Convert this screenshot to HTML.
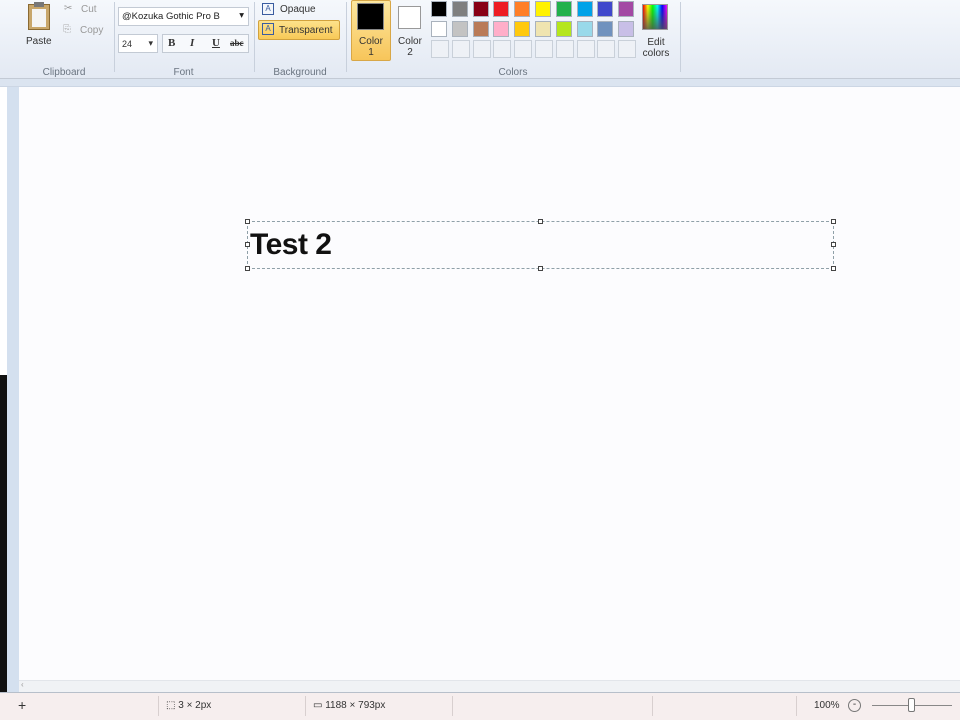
<!DOCTYPE html>
<html><head><meta charset="utf-8"><style>
*{margin:0;padding:0;box-sizing:border-box}
body{width:960px;height:720px;overflow:hidden;position:relative;background:#fcfcfe;font-family:"Liberation Sans","DejaVu Sans",sans-serif;font-size:10px;color:#333}
.abs{position:absolute}
#ribbon{left:0;top:0;width:960px;height:79px;background:linear-gradient(#f5f8fc,#e3e9f3);border-bottom:1px solid #c3cad5}
#band{left:0;top:79px;width:960px;height:8px;background:#dbe4f0;border-bottom:1px solid #ccd6e4}
.sep{width:1px;background:#c8d0dc;top:2px;height:70px}
.glabel{color:#6a7480;font-size:10px;top:67px;text-align:center}
.sw{width:16px;height:16px;border:1px solid #a9b2bd}
.emp{width:18px;height:18px;border:1px solid #c9d0d9;background:#eef1f6}
#left{left:0;top:87px;width:19px;height:606px;background:#d4e0ef;border-left:7px solid #fff}
#dark{left:0;top:375px;width:7px;height:318px;background:#111}
#status{left:0;top:692px;width:960px;height:28px;background:#f6eeee;border-top:1px solid #b7bfca}
#hs{left:19px;top:680px;width:941px;height:12px;background:#f0f2f5;border-top:1px solid #e2e5ea}
.h{width:5px;height:5px;border:1px solid #444;background:#fff}
</style></head><body>
<div id="ribbon" class="abs"></div>
<!-- clipboard -->
<div class="abs" style="left:28px;top:4px;width:22px;height:26px;background:#c8a66a;border:1px solid #8a6a33"></div>
<div class="abs" style="left:32px;top:9px;width:14px;height:18px;background:#f4f4f4"></div>
<div class="abs" style="left:34px;top:2px;width:10px;height:5px;background:#777"></div>
<div class="abs" style="left:26px;top:36px;font-size:10px;color:#333">Paste</div>
<div class="abs" style="left:64px;top:3px;color:#999">✂</div>
<div class="abs" style="left:81px;top:4px;color:#999">Cut</div>
<div class="abs" style="left:63px;top:24px;color:#aaa">⎘</div>
<div class="abs" style="left:80px;top:25px;color:#999">Copy</div>
<div class="abs glabel" style="left:20px;width:88px">Clipboard</div>
<div class="abs sep" style="left:114px"></div>
<!-- font -->
<div class="abs" style="left:118px;top:7px;width:131px;height:19px;background:#fff;border:1px solid #c3cad4;font-size:9.5px;padding:3px 3px;color:#222">@Kozuka Gothic Pro B<span style="position:absolute;right:4px;top:2px">▾</span></div>
<div class="abs" style="left:118px;top:34px;width:40px;height:19px;background:#fff;border:1px solid #c3cad4;font-size:9px;padding:4px 3px">24<span style="position:absolute;right:4px;top:3px">▾</span></div>
<div class="abs" style="left:162px;top:34px;width:87px;height:19px;background:#f7f9fc;border:1px solid #c3cad4;font-family:'Liberation Serif',serif;font-size:11px"><b class="abs" style="left:5px;top:2px">B</b><i class="abs" style="left:27px;top:2px;font-weight:bold">I</i><u class="abs" style="left:49px;top:2px;font-weight:bold">U</u><s class="abs" style="left:67px;top:3px;font-size:9px;font-weight:bold">abc</s></div>
<div class="abs glabel" style="left:118px;width:131px">Font</div>
<div class="abs sep" style="left:254px"></div>
<!-- background -->
<div class="abs" style="left:262px;top:3px;width:12px;height:12px;border:1px solid #3a5ca0;font-size:8px;color:#3a5ca0;text-align:center;line-height:10px">A</div>
<div class="abs" style="left:280px;top:4px;color:#333">Opaque</div>
<div class="abs" style="left:258px;top:20px;width:82px;height:20px;background:linear-gradient(#fde28b,#f8c957);border:1px solid #d2a23d;border-radius:2px"></div>
<div class="abs" style="left:262px;top:23px;width:12px;height:12px;border:1px solid #3a5ca0;font-size:8px;color:#3a5ca0;text-align:center;line-height:10px">A</div>
<div class="abs" style="left:279px;top:25px;color:#333">Transparent</div>
<div class="abs glabel" style="left:256px;width:88px">Background</div>
<div class="abs sep" style="left:346px"></div>
<!-- color 1/2 -->
<div class="abs" style="left:351px;top:0;width:40px;height:61px;background:linear-gradient(#fde8a0,#f7c55a);border:1px solid #d8a747;border-radius:2px"></div>
<div class="abs" style="left:357px;top:3px;width:27px;height:27px;background:#000;border:1px solid #888"></div>
<div class="abs" style="left:351px;top:36px;width:40px;text-align:center;line-height:11px">Color<br>1</div>
<div class="abs" style="left:398px;top:6px;width:23px;height:23px;background:#fff;border:1px solid #999"></div>
<div class="abs" style="left:390px;top:36px;width:40px;text-align:center;line-height:11px">Color<br>2</div>
<!-- palette -->
<div class="abs" style="left:431px;top:1px">
<div style="display:grid;grid-template-columns:repeat(10,20.8px);grid-auto-rows:19.5px">
<div class="sw" style="background:#000"></div><div class="sw" style="background:#7f7f7f"></div><div class="sw" style="background:#880015"></div><div class="sw" style="background:#ed1c24"></div><div class="sw" style="background:#ff7f27"></div><div class="sw" style="background:#fff200"></div><div class="sw" style="background:#22b14c"></div><div class="sw" style="background:#00a2e8"></div><div class="sw" style="background:#3f48cc"></div><div class="sw" style="background:#a349a4"></div>
<div class="sw" style="background:#fff"></div><div class="sw" style="background:#c3c3c3"></div><div class="sw" style="background:#b97a57"></div><div class="sw" style="background:#ffaec9"></div><div class="sw" style="background:#ffc90e"></div><div class="sw" style="background:#efe4b0"></div><div class="sw" style="background:#b5e61d"></div><div class="sw" style="background:#99d9ea"></div><div class="sw" style="background:#7092be"></div><div class="sw" style="background:#c8bfe7"></div>
<div class="emp"></div><div class="emp"></div><div class="emp"></div><div class="emp"></div><div class="emp"></div><div class="emp"></div><div class="emp"></div><div class="emp"></div><div class="emp"></div><div class="emp"></div>
</div></div>
<div class="abs" style="left:642px;top:4px;width:26px;height:26px;border:1px solid #999;background:linear-gradient(to bottom,rgba(255,255,255,0),rgba(80,80,80,.8)),linear-gradient(to right,#f00,#ff0,#0f0,#0ff,#00f,#f0f)"></div>
<div class="abs" style="left:636px;top:37px;width:40px;text-align:center;line-height:11px">Edit<br>colors</div>
<div class="abs glabel" style="left:430px;width:166px">Colors</div>
<div class="abs sep" style="left:680px"></div>
<div id="band" class="abs"></div>
<div id="left" class="abs"></div>
<div id="dark" class="abs"></div>
<!-- text box -->
<div class="abs" style="left:247px;top:221px;width:587px;height:48px;border:1px dashed #8fa0a8"></div>
<div class="abs h" style="left:245px;top:219px"></div><div class="abs h" style="left:538px;top:219px"></div><div class="abs h" style="left:831px;top:219px"></div>
<div class="abs h" style="left:245px;top:242px"></div><div class="abs h" style="left:831px;top:242px"></div>
<div class="abs h" style="left:245px;top:266px"></div><div class="abs h" style="left:538px;top:266px"></div><div class="abs h" style="left:831px;top:266px"></div>
<div class="abs" style="left:250px;top:228px;font-size:30px;font-weight:bold;color:#111;letter-spacing:-0.5px">Test 2</div>
<div id="hs" class="abs"><span class="abs" style="left:2px;top:-1px;color:#999;font-size:8px">‹</span></div>
<div id="status" class="abs">
<span class="abs" style="left:18px;top:4px;font-size:14px;color:#333">+</span>
<div class="abs" style="left:158px;top:3px;width:1px;height:20px;background:#d8cfcf"></div>
<span class="abs" style="left:166px;top:7px;color:#333">⬚ 3 × 2px</span>
<div class="abs" style="left:305px;top:3px;width:1px;height:20px;background:#d8cfcf"></div>
<span class="abs" style="left:313px;top:7px;color:#333">▭ 1188 × 793px</span>
<div class="abs" style="left:452px;top:3px;width:1px;height:20px;background:#d8cfcf"></div>
<div class="abs" style="left:652px;top:3px;width:1px;height:20px;background:#d8cfcf"></div>
<div class="abs" style="left:796px;top:3px;width:1px;height:20px;background:#d8cfcf"></div>
<span class="abs" style="left:814px;top:7px;color:#333">100%</span>
<div class="abs" style="left:848px;top:6px;width:13px;height:13px;border:1px solid #777;border-radius:50%;text-align:center;line-height:10px">-</div>
<div class="abs" style="left:872px;top:12px;width:80px;height:1px;background:#888"></div>
<div class="abs" style="left:908px;top:5px;width:7px;height:14px;border:1px solid #777;background:#fff;border-radius:2px"></div>
</div>
</body></html>
